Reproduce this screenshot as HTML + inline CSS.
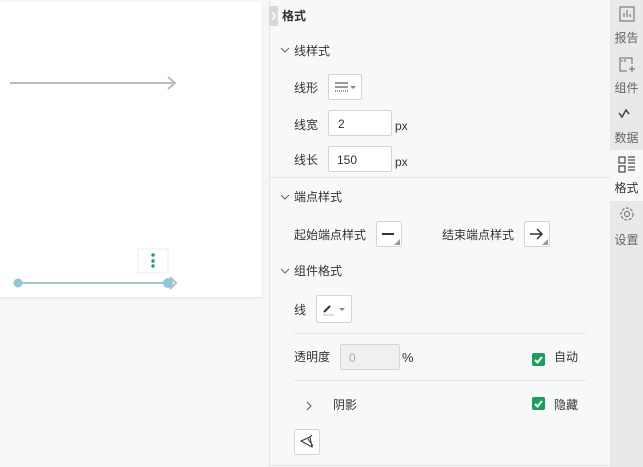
<!DOCTYPE html><html><head><meta charset="utf-8"><style>
*{margin:0;padding:0;box-sizing:border-box}
body{width:643px;height:467px;position:relative;overflow:hidden;background:#f5f6f8;font-family:"Liberation Sans","Noto Sans CJK SC",sans-serif;font-size:12px;color:#333}
.a{position:absolute}
.t{position:absolute;line-height:14px;white-space:nowrap}
.box{position:absolute;background:#fff;border:1px solid #d5d5d5;border-radius:2px}
.sep{position:absolute;height:1px;background:#e3e4e6}
.cb{position:absolute;width:13px;height:13px;background:#1aa05a;border-radius:2px}
.side{position:absolute;left:610px;width:33px;text-align:center;font-size:12px;color:#666}
</style></head><body>
<div class="a" style="left:0;top:2px;width:262px;height:295px;background:#fff;box-shadow:0 1px 2px rgba(0,0,0,.08)"></div>
<svg class="a" style="left:0;top:0" width="262" height="297">
<line x1="10" y1="83" x2="175" y2="83" stroke="#bbb" stroke-width="2"/>
<polyline points="168,77 175,83 168,89" fill="none" stroke="#bbb" stroke-width="2"/>
<line x1="16" y1="283" x2="168" y2="283" stroke="#a8c4cb" stroke-width="2"/>
<polyline points="170,277 176,283 170,289" fill="none" stroke="#bbb" stroke-width="2"/>
<circle cx="18" cy="283" r="4.5" fill="#8ec7da"/><circle cx="168" cy="283" r="5" fill="#8ec7da"/>
<rect x="138" y="249" width="30" height="24" fill="#fff" stroke="#eee"/>
<circle cx="153" cy="255" r="1.7" fill="#1aa05a"/><circle cx="153" cy="261" r="1.7" fill="#1aa05a"/><circle cx="153" cy="266" r="1.7" fill="#1aa05a"/>
</svg>
<div class="a" style="left:269px;top:0;width:341px;height:467px;background:#f7f8fa;border-left:1px solid #e3e4e6"></div>
<div class="sep" style="left:269px;top:465px;width:341px"></div>
<div class="a" style="left:269px;top:6px;width:9px;height:20px;background:#d8d8d8"></div>
<svg class="a" style="left:269px;top:6px" width="9" height="20"><polyline points="3,6 6,10 3,14" fill="none" stroke="#fff" stroke-width="1.5"/></svg>
<div class="t" style="left:282px;top:9px;font-weight:bold">格式</div>
<svg class="a" style="left:280px;top:46px" width="10" height="8"><polyline points="1,2 5,6 9,2" fill="none" stroke="#666"/></svg>
<div class="t" style="left:294px;top:44px">线样式</div>
<div class="t" style="left:294px;top:81px">线形</div>
<div class="box" style="left:328px;top:74px;width:34px;height:26px"></div>
<svg class="a" style="left:333px;top:80px" width="26" height="14"><line x1="2" y1="3" x2="15" y2="3" stroke="#333"/><line x1="2" y1="7" x2="15" y2="7" stroke="#333"/><line x1="2" y1="11" x2="15" y2="11" stroke="#333" stroke-dasharray="1,1"/><polygon points="17,6 23,6 20,9" fill="#888"/></svg>
<div class="t" style="left:294px;top:118px">线宽</div>
<div class="box" style="left:328px;top:110px;width:64px;height:26px"></div><div class="t" style="left:338px;top:117px">2</div><div class="t" style="left:395px;top:119px">px</div>
<div class="t" style="left:294px;top:153px">线长</div>
<div class="box" style="left:328px;top:146px;width:64px;height:26px"></div><div class="t" style="left:337px;top:153px">150</div><div class="t" style="left:395px;top:155px">px</div>
<div class="sep" style="left:270px;top:177px;width:340px"></div>
<svg class="a" style="left:280px;top:193px" width="10" height="8"><polyline points="1,2 5,6 9,2" fill="none" stroke="#666"/></svg>
<div class="t" style="left:294px;top:190px">端点样式</div>
<div class="t" style="left:294px;top:228px">起始端点样式</div>
<div class="box" style="left:376px;top:221px;width:26px;height:26px"></div>
<svg class="a" style="left:376px;top:221px" width="26" height="26"><line x1="6" y1="13" x2="18" y2="13" stroke="#333" stroke-width="2"/><polygon points="24,18 24,24 18,24" fill="#999"/></svg>
<div class="t" style="left:442px;top:228px">结束端点样式</div>
<div class="box" style="left:524px;top:221px;width:26px;height:26px"></div>
<svg class="a" style="left:524px;top:221px" width="26" height="26"><line x1="6" y1="13" x2="18" y2="13" stroke="#333" stroke-width="1.5"/><polyline points="13,8 18,13 13,18" fill="none" stroke="#333" stroke-width="1.5"/><polygon points="24,18 24,24 18,24" fill="#999"/></svg>
<svg class="a" style="left:280px;top:267px" width="10" height="8"><polyline points="1,2 5,6 9,2" fill="none" stroke="#666"/></svg>
<div class="t" style="left:294px;top:264px">组件格式</div>
<div class="t" style="left:294px;top:303px">线</div>
<div class="box" style="left:316px;top:295px;width:36px;height:28px"></div>
<svg class="a" style="left:316px;top:295px" width="36" height="28"><line x1="8" y1="17" x2="14" y2="11" stroke="#333" stroke-width="2"/><line x1="7" y1="20" x2="18" y2="20" stroke="#bbb"/><polygon points="23,13 29,13 26,16" fill="#888"/></svg>
<div class="sep" style="left:294px;top:333px;width:292px"></div>
<div class="t" style="left:294px;top:350px">透明度</div>
<div class="a" style="left:340px;top:344px;width:60px;height:26px;background:#f0f0f0;border:1px solid #d5d5d5;border-radius:2px"></div><div class="t" style="left:349px;top:351px;color:#aaa">0</div>
<div class="t" style="left:402px;top:351px;font-size:13px">%</div>
<div class="cb" style="left:532px;top:353px"></div>
<svg class="a" style="left:532px;top:353px" width="13" height="13"><polyline points="3,7 5.5,9.5 10,4" fill="none" stroke="#fff" stroke-width="2"/></svg>
<div class="t" style="left:554px;top:350px">自动</div>
<div class="sep" style="left:294px;top:380px;width:292px"></div>
<svg class="a" style="left:305px;top:401px" width="8" height="10"><polyline points="2,1 6,5 2,9" fill="none" stroke="#555"/></svg>
<div class="t" style="left:333px;top:398px">阴影</div>
<div class="cb" style="left:532px;top:397px"></div>
<svg class="a" style="left:532px;top:397px" width="13" height="13"><polyline points="3,7 5.5,9.5 10,4" fill="none" stroke="#fff" stroke-width="2"/></svg>
<div class="t" style="left:554px;top:398px">隐藏</div>
<div class="box" style="left:294px;top:429px;width:26px;height:26px"></div>
<svg class="a" style="left:294px;top:429px" width="26" height="26"><path d="M7 12 L16 8 L18 18 Z M16 8 L18 6 M14 10 L19 17" fill="none" stroke="#333"/></svg>
<div class="a" style="left:610px;top:0;width:33px;height:467px;background:#e8e9eb"></div>
<div class="a" style="left:610px;top:150px;width:33px;height:51px;background:#f7f8fa"></div>
<svg class="a" style="left:610px;top:0" width="33" height="230" fill="none" stroke="#666">
<rect x="10" y="7" width="14" height="14"/><path d="M14 17v-4M17 17v-7M20 17v-3"/>
<path d="M22 64v-6h-12v13h7M12 62v-2M15 62v-3M22 66v6M19 69h6"/>
<path d="M9 113l3 4 4-7 3 4" stroke="#444" stroke-width="1.5"/>
<rect x="9" y="157" width="6" height="6" stroke="#222"/><rect x="9" y="166" width="6" height="6" stroke="#222"/><path d="M18 157h7M18 160h7M18 163h7M18 167h7M18 170h7" stroke="#222"/>
<circle cx="17" cy="214" r="2.5"/><circle cx="17" cy="214" r="6" stroke-dasharray="3,1.5"/>
</svg>
<div class="side" style="top:29px">报告</div>
<div class="side" style="top:79px">组件</div>
<div class="side" style="top:129px">数据</div>
<div class="side" style="top:179px;color:#333">格式</div>
<div class="side" style="top:231px">设置</div>
</body></html>
